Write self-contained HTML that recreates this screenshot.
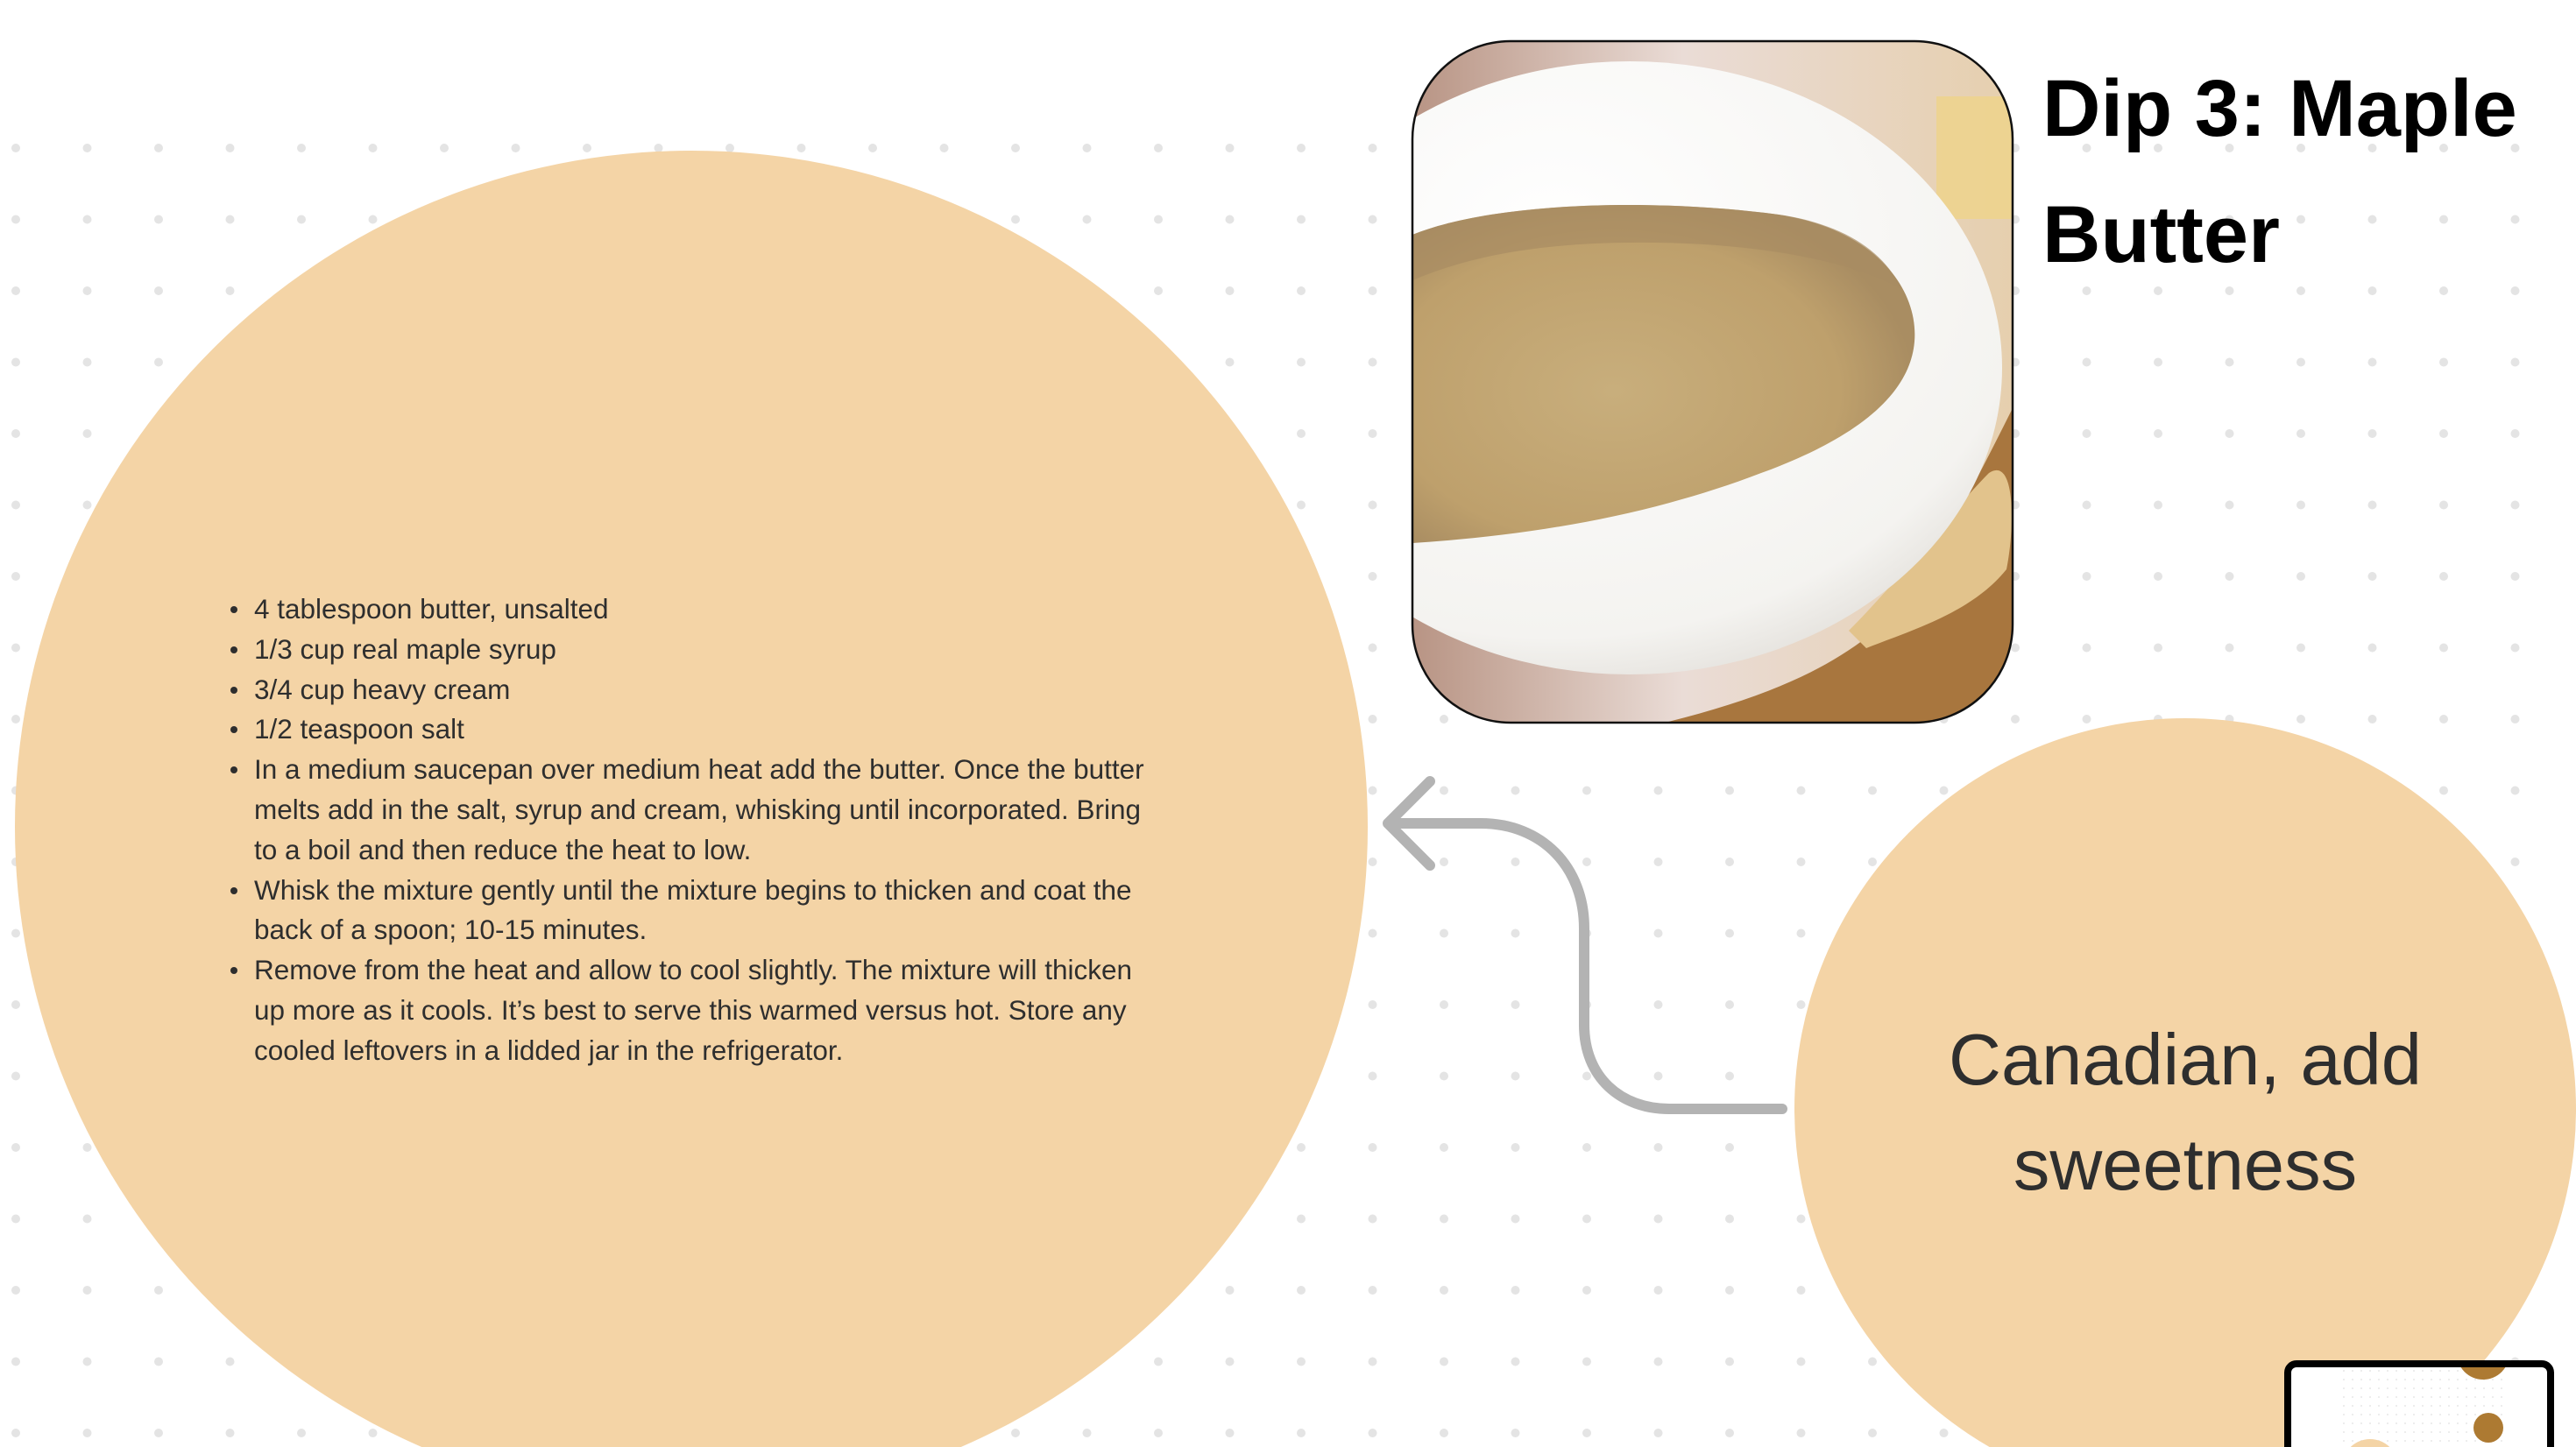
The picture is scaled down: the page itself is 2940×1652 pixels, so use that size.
<!DOCTYPE html>
<html><head><meta charset="utf-8"><style>
html,body{margin:0;padding:0;width:2940px;height:1652px;overflow:hidden;background:#fff}
svg{position:absolute;left:0;top:0}
.t{position:absolute;font-family:"Liberation Sans",sans-serif;white-space:nowrap}
ul{margin:0;padding:0;list-style:none}
li{position:relative;padding-left:27px}
li:before{content:"";position:absolute;left:0;top:19px;width:8px;height:8px;border-radius:50%;background:#2e2e2e}
</style></head><body>
<svg width="2940" height="1652" viewBox="0 0 2940 1652">
<defs>
<pattern id="dots" x="-22" y="128" width="81.5" height="81.5" patternUnits="userSpaceOnUse">
<circle cx="40" cy="41" r="5" fill="#e4e4e4"/></pattern>
<pattern id="mdots" x="2700" y="1560" width="10" height="10" patternUnits="userSpaceOnUse">
<circle cx="5" cy="5" r="1" fill="#e8e8e8"/></pattern>
<clipPath id="pc"><rect x="1612" y="47" width="685" height="778" rx="112"/></clipPath>
<clipPath id="mc"><rect x="2615" y="1561" width="292" height="100"/></clipPath>
<radialGradient id="sauce" cx="0.4" cy="0.55" r="0.6"><stop offset="0" stop-color="#c8ae7c"/><stop offset="0.75" stop-color="#bea06c"/><stop offset="1" stop-color="#a98d62"/></radialGradient>
<linearGradient id="bg" x1="0" y1="0" x2="1" y2="0"><stop offset="0" stop-color="#b89484"/><stop offset="0.45" stop-color="#eadcd6"/><stop offset="1" stop-color="#e6cfae"/></linearGradient>
<radialGradient id="bowl" cx="0.4" cy="0.3" r="0.8"><stop offset="0" stop-color="#ffffff"/><stop offset="0.8" stop-color="#f4f3f0"/><stop offset="1" stop-color="#dcd8d2"/></radialGradient>
</defs>
<rect x="0" y="128" width="2940" height="1524" fill="url(#dots)"/>
<circle cx="789" cy="944" r="772" fill="#f4d4a6"/>
<circle cx="2494" cy="1266" r="446" fill="#f4d4a6"/>
<g clip-path="url(#pc)">
<rect x="1612" y="47" width="685" height="778" fill="url(#bg)"/>
<rect x="2210" y="110" width="90" height="140" fill="#efd38a" opacity="0.8"/>
<path d="M1900 825 C2000 800 2080 770 2140 720 C2200 660 2250 560 2300 460 L2300 825 Z" fill="#a8763e"/>
<path d="M2110 720 C2170 660 2230 580 2270 540 C2300 520 2300 600 2290 650 C2250 700 2180 720 2130 740 Z" fill="#e2c38c"/>
<ellipse cx="1860" cy="420" rx="425" ry="350" fill="url(#bowl)"/>
<path d="M1612 268 C1700 232 1880 225 2030 245 C2140 262 2190 330 2185 390 C2180 450 2120 500 2010 540 C1880 590 1740 612 1612 620 Z" fill="url(#sauce)"/>
<path d="M1612 268 C1700 232 1880 225 2030 245 C2100 255 2150 285 2170 330 C2100 290 1960 272 1820 278 C1720 283 1660 300 1612 320 Z" fill="#a88c62" opacity="0.7"/>
</g>
<rect x="1612" y="47" width="685" height="778" rx="112" fill="none" stroke="#111" stroke-width="2.5"/>
<path d="M2034 1266 L1905 1266 C1850 1266 1808 1230 1808 1170 L1808 1060 C1808 990 1760 940 1690 940 L1590 940" fill="none" stroke="#b3b3b3" stroke-width="12" stroke-linecap="round" stroke-linejoin="round"/>
<path d="M1632 892 L1584 940 L1632 988" fill="none" stroke="#b3b3b3" stroke-width="12" stroke-linecap="round" stroke-linejoin="round"/>
<rect x="2611" y="1557" width="300" height="120" rx="10" fill="#fff" stroke="#000" stroke-width="8"/>
<g clip-path="url(#mc)">
<rect x="2668" y="1561" width="190" height="100" fill="url(#mdots)"/>
<circle cx="2834" cy="1545" r="30" fill="#ad7a32"/>
<circle cx="2840" cy="1630" r="17" fill="#ad7a32"/>
<circle cx="2705" cy="1675" r="32" fill="#f4d4a6"/>
<circle cx="2773" cy="1665" r="12" fill="#f4d4a6"/>
</g>
</svg>
<div class="t" style="left:2331px;top:52px;font-size:92px;font-weight:bold;line-height:144px;color:#000">Dip 3: Maple<br>Butter</div>
<div class="t" style="left:2094px;top:1150px;width:800px;text-align:center;font-size:83px;line-height:120px;color:#2e2e2e">Canadian, add<br>sweetness</div>
<div class="t" style="left:263px;top:673px;font-size:31.5px;line-height:45.8px;color:#2e2e2e">
<ul>
<li>4 tablespoon butter, unsalted</li>
<li>1/3 cup real maple syrup</li>
<li>3/4 cup heavy cream</li>
<li>1/2 teaspoon salt</li>
<li>In a medium saucepan over medium heat add the butter. Once the butter<br>melts add in the salt, syrup and cream, whisking until incorporated. Bring<br>to a boil and then reduce the heat to low.</li>
<li>Whisk the mixture gently until the mixture begins to thicken and coat the<br>back of a spoon; 10-15 minutes.</li>
<li>Remove from the heat and allow to cool slightly. The mixture will thicken<br>up more as it cools. It’s best to serve this warmed versus hot. Store any<br>cooled leftovers in a lidded jar in the refrigerator.</li>
</ul></div>
</body></html>
